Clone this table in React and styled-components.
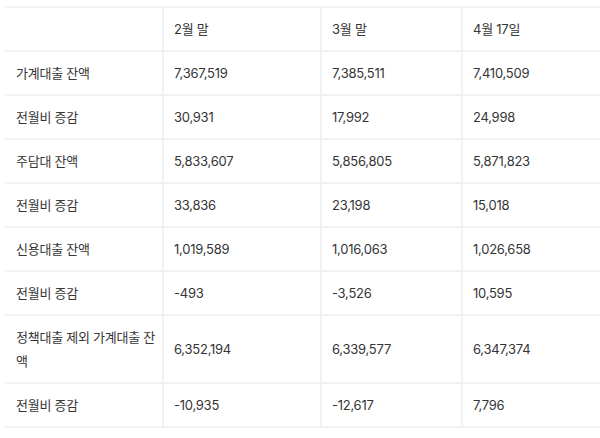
import React from 'react';
import styled, { createGlobalStyle } from 'styled-components';

const GlobalStyle = createGlobalStyle`
  html, body {
    margin: 0;
    padding: 0;
    background: #ffffff;
    overflow: hidden;
  }
  body {
    font-family: Inter, "Noto Sans CJK KR", sans-serif;
  }
`;

const Page = styled.div`
  width: 600px;
  height: 438px;
  padding: 6px 0 0 5px;
  box-sizing: border-box;
  overflow: hidden;
`;

const Table = styled.table`
  width: 600px;
  border-collapse: collapse;
  table-layout: fixed;
  color: #353535;
  font-size: 13px;
  line-height: 24px;
`;

const Cell = styled.td`
  padding: 9px ${(p) => (p.$first ? 4 : 9)}px 9px ${(p) => (p.$first ? 11 : 10)}px;
  border-top: 2px solid #f2f2f2;
  border-bottom: 2px solid #f2f2f2;
  border-left: ${(p) => (p.$first ? 'none' : '2px solid #f2f2f2')};
  vertical-align: middle;
  text-align: left;
  font-weight: 400;
  letter-spacing: -0.25px;
  word-break: break-all;
`;

const columns = ['', '2월 말', '3월 말', '4월 17일'];
const widths = [158, 158, 141, 143];

const rows = [
  ['가계대출 잔액', '7,367,519', '7,385,511', '7,410,509'],
  ['전월비 증감', '30,931', '17,992', '24,998'],
  ['주담대 잔액', '5,833,607', '5,856,805', '5,871,823'],
  ['전월비 증감', '33,836', '23,198', '15,018'],
  ['신용대출 잔액', '1,019,589', '1,016,063', '1,026,658'],
  ['전월비 증감', '-493', '-3,526', '10,595'],
  ['정책대출 제외 가계대출 잔액', '6,352,194', '6,339,577', '6,347,374'],
  ['전월비 증감', '-10,935', '-12,617', '7,796'],
];

export default function App() {
  return (
    <>
      <GlobalStyle />
      <Page>
        <Table>
          <colgroup>
            {widths.map((w, i) => (
              <col key={i} style={{ width: w }} />
            ))}
          </colgroup>
          <thead>
            <tr>
              {columns.map((c, i) => (
                <Cell as="th" key={i} $first={i === 0}>
                  {c}
                </Cell>
              ))}
            </tr>
          </thead>
          <tbody>
            {rows.map((r, ri) => (
              <tr key={ri}>
                {r.map((v, i) => (
                  <Cell key={i} $first={i === 0}>
                    {v}
                  </Cell>
                ))}
              </tr>
            ))}
          </tbody>
        </Table>
      </Page>
    </>
  );
}
